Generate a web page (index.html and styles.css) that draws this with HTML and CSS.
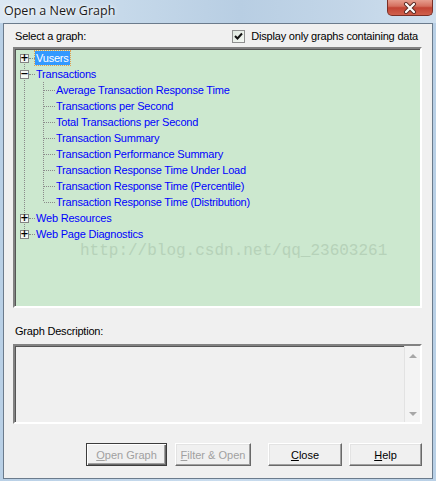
FILE: index.html
```html
<!DOCTYPE html>
<html lang="en">
<head>
    <meta charset="UTF-8">
    <title>Open a New Graph</title>
    <link rel="stylesheet" href="styles.css">
</head>
<body>
    <div class="window">
        <div class="titlebar">
            <span class="title">Open a New Graph</span>
            <div class="close-btn">
                <svg width="16" height="12" viewBox="0 0 16 12">
                    <path d="M4 2 L12 10 M12 2 L4 10" stroke="#5a2a24" stroke-width="4" stroke-linecap="round"/>
                    <path d="M4 2 L12 10 M12 2 L4 10" stroke="#ffffff" stroke-width="2.2" stroke-linecap="round"/>
                </svg>
            </div>
        </div>

        <div class="client">
            <div class="top-row">
                <span>Select a graph:</span>
                <label class="check">
                    <span class="check-box">
                        <svg width="11" height="11" viewBox="0 0 11 11">
                            <path d="M2 5 L4.5 7.5 L9 2.5" stroke="#111" stroke-width="2" fill="none"/>
                        </svg>
                    </span>
                    Display only graphs containing data
                </label>
            </div>

            <div class="tree">
                <div class="roots">
                    <div class="row">
                        <span class="expander">+</span><span class="hline short"></span><span class="item selected">Vusers</span>
                    </div>
                    <div class="row">
                        <span class="expander">&minus;</span><span class="hline short"></span><span class="item">Transactions</span>
                    </div>
                    <div class="children">
                        <div class="row child"><span class="hline"></span><span class="item">Average Transaction Response Time</span></div>
                        <div class="row child"><span class="hline"></span><span class="item">Transactions per Second</span></div>
                        <div class="row child"><span class="hline"></span><span class="item">Total Transactions per Second</span></div>
                        <div class="row child"><span class="hline"></span><span class="item">Transaction Summary</span></div>
                        <div class="row child"><span class="hline"></span><span class="item">Transaction Performance Summary</span></div>
                        <div class="row child"><span class="hline"></span><span class="item">Transaction Response Time Under Load</span></div>
                        <div class="row child"><span class="hline"></span><span class="item">Transaction Response Time (Percentile)</span></div>
                        <div class="row child"><span class="hline"></span><span class="item">Transaction Response Time (Distribution)</span></div>
                    </div>
                    <div class="row">
                        <span class="expander">+</span><span class="hline short"></span><span class="item">Web Resources</span>
                    </div>
                    <div class="row">
                        <span class="expander">+</span><span class="hline short"></span><span class="item">Web Page Diagnostics</span>
                    </div>
                </div>
                <div class="watermark">http://blog.csdn.net/qq_23603261</div>
            </div>

            <div class="desc-label">Graph Description:</div>
            <div class="desc">
                <div class="desc-text"></div>
                <div class="scrollbar">
                    <span class="arrow up"></span>
                    <span class="arrow down"></span>
                </div>
            </div>

            <div class="buttons">
                <button class="btn btn-open default disabled"><u>O</u>pen Graph</button>
                <button class="btn btn-filter disabled"><u>F</u>ilter &amp; Open</button>
                <button class="btn btn-close"><u>C</u>lose</button>
                <button class="btn btn-help"><u>H</u>elp</button>
            </div>
        </div>
    </div>
</body>
</html>
```

FILE: styles.css
```css
* {
    margin: 0;
    padding: 0;
    box-sizing: border-box;
}

body {
    width: 436px;
    height: 481px;
    overflow: hidden;
    background: #c5d9ec;
    font-family: "Liberation Sans", Arial, sans-serif;
    font-size: 11px;
    letter-spacing: -0.2px;
    color: #000;
}

.window {
    width: 436px;
    height: 481px;
    display: flex;
    flex-direction: column;
    padding: 0 3px 2px 3px;
    background: linear-gradient(90deg, #b9d0e6 0, #c9dcee 50%, #b9d0e6 100%);
}

/* title bar */
.titlebar {
    height: 23px;
    margin: 0 -3px;
    padding-left: 4px;
    position: relative;
    display: flex;
    align-items: center;
    background: linear-gradient(90deg, #dce8f3 0, #c6d9ea 28%, #b8cee3 55%, #c3d6e8 80%, #cfdfee 100%);
}

.title {
    font-family: "Open Sans", "Noto Sans", sans-serif;
    font-size: 12.5px;
    letter-spacing: 0;
    color: #1a1a1a;
    margin-top: -3px;
    text-shadow: 0 0 6px #ffffff, 0 0 3px #ffffff;
}

.close-btn {
    position: absolute;
    top: -1px;
    right: 3px;
    width: 46px;
    height: 17px;
    border: 1px solid #7a2f25;
    border-top: none;
    border-radius: 0 0 5px 5px;
    background: linear-gradient(to bottom, #e9a596 0, #d5705f 45%, #c24434 55%, #d0604c 100%);
    display: flex;
    align-items: center;
    justify-content: center;
    padding-top: 1px;
}

/* client area */
.client {
    flex: 1;
    display: flex;
    flex-direction: column;
    background: #f0f0f0;
    border: 1px solid #6b7b8c;
    padding: 6px 10px 11px 9px;
}

.top-row {
    height: 13px;
    line-height: 13px;
    display: flex;
    justify-content: space-between;
    padding: 0 4px 0 2px;
    margin-bottom: 4px;
}

.check {
    display: flex;
    align-items: center;
    gap: 6px;
}

.check-box {
    width: 13px;
    height: 13px;
    border: 1px solid #8e8f8f;
    background: linear-gradient(135deg, #dfe7df 0, #f4f8f4 100%);
    display: flex;
    align-items: center;
    justify-content: center;
}

/* tree */
.tree {
    height: 261px;
    position: relative;
    background: #cce8cf;
    border-style: solid;
    border-width: 2px;
    border-color: #828282 #ffffff #ffffff #828282;
    box-shadow: inset 1px 1px 0 #555555;
    padding-top: 1px;
    overflow: hidden;
}

.roots {
    background: repeating-linear-gradient(to bottom, #8a8a8a 0 1px, transparent 1px 2px) no-repeat 9px 8px / 1px calc(100% - 16px);
}

.row {
    height: 16px;
    display: flex;
    align-items: center;
    padding-left: 5px;
    white-space: nowrap;
}

.expander {
    width: 9px;
    height: 9px;
    border: 1px solid #848484;
    background: #f4f8f4;
    font-size: 10px;
    line-height: 6px;
    font-weight: bold;
    letter-spacing: 0;
    color: #000;
    display: flex;
    align-items: center;
    justify-content: center;
    font-family: "DejaVu Sans", sans-serif;
}

.hline {
    width: 11px;
    height: 0;
    border-top: 1px dotted #8a8a8a;
}

.hline.short {
    width: 6px;
}

.item {
    color: #0000ff;
    padding: 1px;
    line-height: 12px;
}

.item.selected {
    background: #3399ff;
    color: #ffffff;
    outline: 1px dotted #e0a050;
}

.children {
    margin-left: 28px;
    background: repeating-linear-gradient(to bottom, #8a8a8a 0 1px, transparent 1px 2px) no-repeat 0 -4px / 1px calc(100% - 4px);
}

.row.child {
    padding-left: 1px;
}

.watermark {
    position: absolute;
    left: 65px;
    top: 193px;
    font-family: "Liberation Mono", monospace;
    font-size: 16px;
    letter-spacing: 0;
    color: #b6d2b9;
}

/* description */
.desc-label {
    margin-top: 17px;
    height: 13px;
    line-height: 13px;
    padding-left: 2px;
}

.desc {
    margin-top: 6px;
    height: 80px;
    display: flex;
    border-style: solid;
    border-width: 2px;
    border-color: #828282 #ffffff #ffffff #828282;
    box-shadow: inset 1px 1px 0 #555555;
    background: #f0f0f0;
}

.desc-text {
    flex: 1;
}

.scrollbar {
    width: 16px;
    border-left: 1px solid #e2e2e2;
    background: #f3f3f3;
    display: flex;
    flex-direction: column;
    justify-content: space-between;
    align-items: center;
    padding: 8px 0 6px;
}

.arrow {
    width: 0;
    height: 0;
    border-left: 4px solid transparent;
    border-right: 4px solid transparent;
}

.arrow.up {
    border-bottom: 4px solid #a6a6a6;
}

.arrow.down {
    border-top: 4px solid #a6a6a6;
}

/* buttons */
.buttons {
    margin-top: 19px;
    display: flex;
    justify-content: flex-end;
}

.btn {
    height: 23px;
    font-family: "Liberation Sans", Arial, sans-serif;
    font-size: 11px;
    letter-spacing: 0;
    color: #000;
    background: #f0f0f0;
    border-style: solid;
    border-width: 1px;
    border-color: #ffffff #696969 #696969 #ffffff;
    box-shadow: inset -1px -1px 0 #a0a0a0, inset 1px 1px 0 #e3e3e3;
}

.btn.disabled {
    color: #a0a0a0;
}

.btn.default {
    border-color: #3c3c3c;
    box-shadow: inset 1px 1px 0 #ffffff, inset -1px -1px 0 #696969, inset -2px -2px 0 #a0a0a0;
}

.btn-open {
    width: 81px;
}

.btn-filter {
    width: 76px;
    margin-left: 8px;
}

.btn-close {
    width: 74px;
    margin-left: 17px;
}

.btn-help {
    width: 73px;
    margin-left: 7px;
}
```
